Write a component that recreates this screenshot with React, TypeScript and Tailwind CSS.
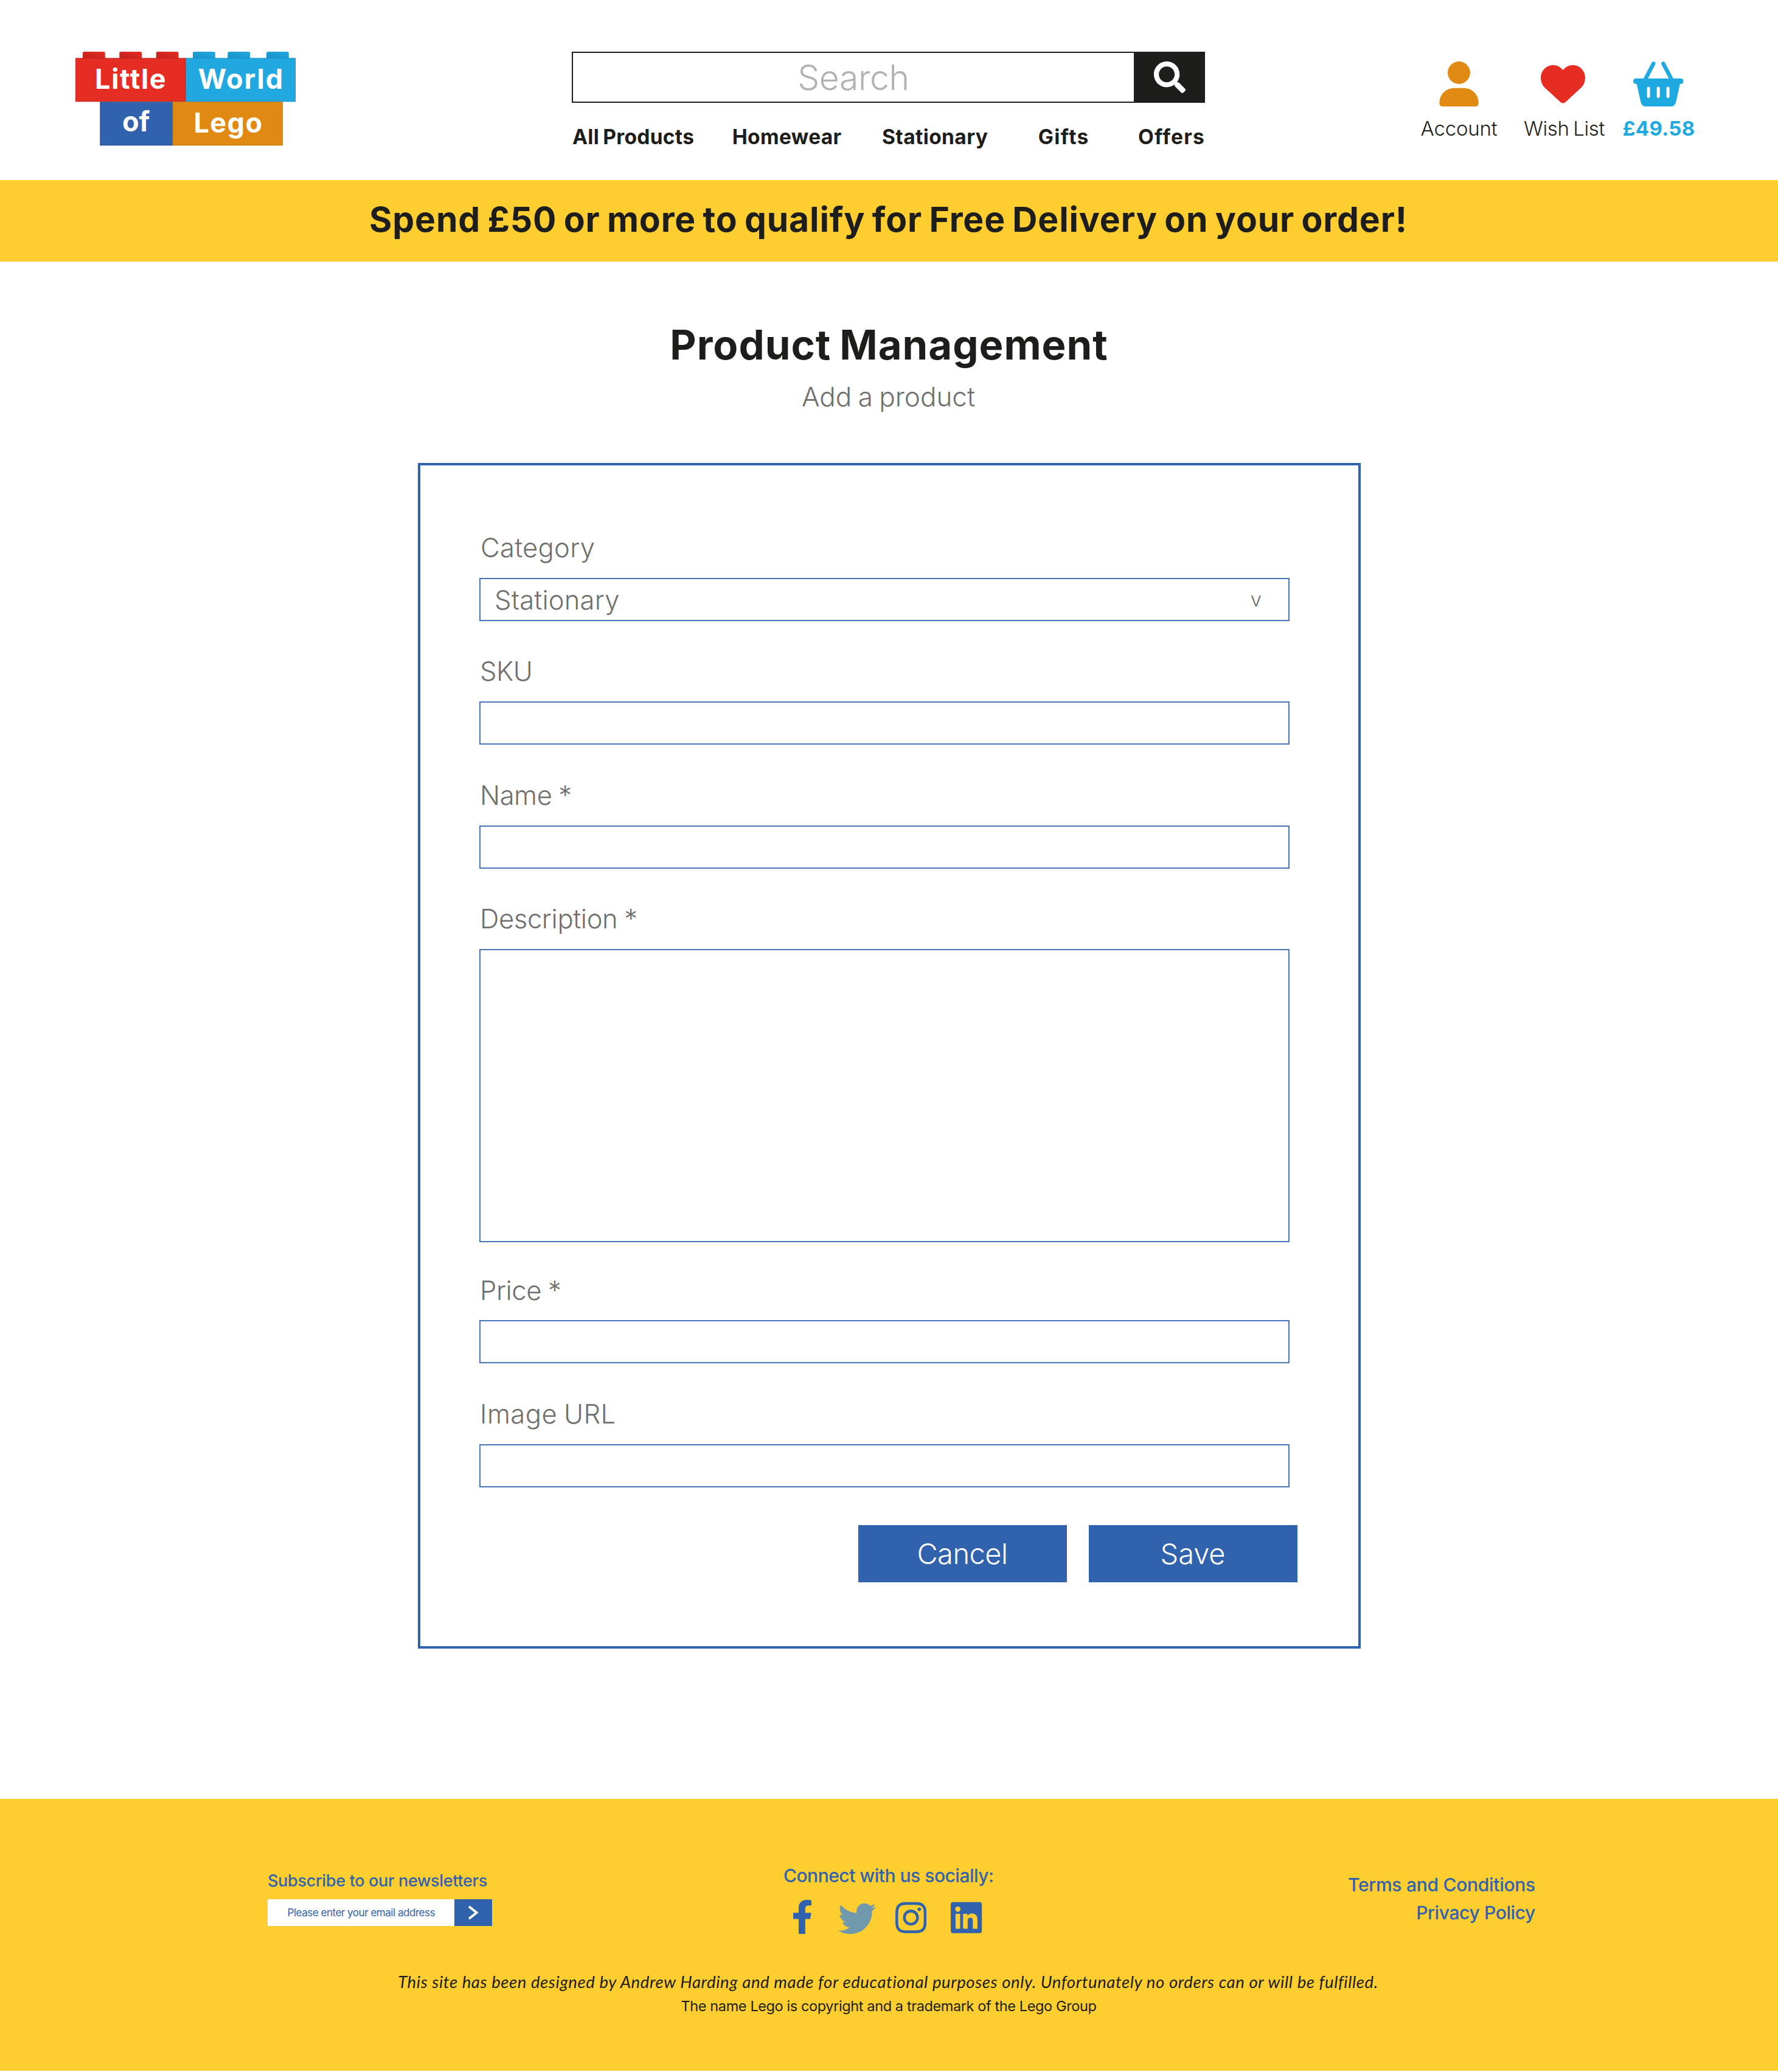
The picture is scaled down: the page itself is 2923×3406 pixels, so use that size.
import type { ReactNode } from "react";
import { FaFacebookF, FaInstagram, FaLinkedin, FaSearch, FaTwitter } from "react-icons/fa";

function Logo() {
  const studs = [
    { x: 12, fill: "url(#redStud)" },
    { x: 72.3, fill: "url(#redStud)" },
    { x: 132.7, fill: "url(#redStud)" },
    { x: 193, fill: "url(#cyanStud)" },
    { x: 250.3, fill: "url(#cyanStud)" },
    { x: 314, fill: "url(#cyanStud)" },
  ];
  return (
    <svg width="362" height="155" viewBox="0 0 362 155" className="block font-['Inter',sans-serif]">
      <defs>
        <linearGradient id="redStud" x1="0" y1="1" x2="1" y2="0">
          <stop offset="0" stopColor="#b91f1c" />
          <stop offset="1" stopColor="#e62d24" />
        </linearGradient>
        <linearGradient id="cyanStud" x1="0" y1="1" x2="1" y2="0">
          <stop offset="0" stopColor="#1a8fc4" />
          <stop offset="1" stopColor="#22a8e1" />
        </linearGradient>
      </defs>
      {studs.map((s) => (
        <rect key={s.x} x={s.x} y="0" width="36.8" height="14" rx="2.5" fill={s.fill} />
      ))}
      <rect x="0" y="10.3" width="181" height="72" fill="#c4251e" />
      <rect x="1" y="11.3" width="179" height="70" fill="#e62d24" />
      <rect x="181" y="10.3" width="181" height="72" fill="#1b90c6" />
      <rect x="182" y="11.3" width="179" height="70" fill="#22a8e1" />
      <rect x="40.3" y="82.3" width="119.5" height="72" fill="#264f90" />
      <rect x="41.3" y="83.3" width="117.5" height="70" fill="#3062ae" />
      <rect x="159.8" y="82.3" width="181" height="72" fill="#bf730d" />
      <rect x="160.8" y="83.3" width="179" height="70" fill="#e18a13" />
      <g fill="#fff" fontSize="45" fontWeight="700">
        <text x="32" y="60.5" letterSpacing="1.7">Little</text>
        <text x="201.5" y="60.5" letterSpacing="2">World</text>
        <text x="77" y="131" letterSpacing="0">of</text>
        <text x="194.5" y="132.5" letterSpacing="1.4">Lego</text>
      </g>
    </svg>
  );
}

function AccountIcon() {
  return (
    <svg width="65" height="74" viewBox="0 0 64.3 74" fill="#e18a13" className="block">
      <circle cx="32.1" cy="18.5" r="18.5" />
      <path d="M0 68C0 54 11 43.7 25 43.7H39.5C53.5 43.7 64.3 54 64.3 68Q64.3 74 59.3 74H5Q0 74 0 68Z" />
    </svg>
  );
}

function HeartIcon() {
  return (
    <svg width="73" height="63" viewBox="0 0 73 63" fill="#e62d24" className="block">
      <path d="M36.5 8C32 3 27 0 20.5 0C9 0 0 9.5 0 21C0 27 2.5 33 6.5 37L32.5 61Q36.5 64 40.5 61L66.5 37C70.5 33 73 27 73 21C73 9.5 64 0 53 0C46 0 41 3 36.5 8Z" />
    </svg>
  );
}

function BasketIcon() {
  return (
    <svg width="83" height="74" viewBox="0 0 83 74" className="block">
      <g stroke="#1eaae1" strokeWidth="6.5" strokeLinecap="round">
        <path d="M33.3 3.5L20 29" />
        <path d="M49.3 3.5L62.8 29" />
      </g>
      <g fill="#1eaae1">
        <rect x="0" y="28" width="82.6" height="9" rx="4.5" />
        <path d="M5.3 35L12 65.5Q14 74 20 74H62.6Q68.6 74 70.6 65.5L77.3 35Z" />
      </g>
      <g fill="#fff">
        <rect x="22.6" y="41.5" width="5" height="18.5" rx="2.5" />
        <rect x="38.7" y="41.5" width="5" height="18.5" rx="2.5" />
        <rect x="54.6" y="41.5" width="5" height="18.5" rx="2.5" />
      </g>
    </svg>
  );
}

function Field({ label, className = "", tall = false, children }: { label: string; className?: string; tall?: boolean; children?: ReactNode }) {
  return (
    <div className={tall ? "mb-[57.3px]" : "mb-[61.7px]"}>
      <div className={`ml-[1px] h-[43.5px] text-[43.5px] leading-none whitespace-nowrap ${className}`}>{label}</div>
      <div
        className={`mt-[27.3px] flex w-[1332px] items-center justify-between border-2 border-[#4a74b8] ${tall ? "h-[482px]" : "h-[71px]"}`}
      >
        {children}
      </div>
    </div>
  );
}

export default function App() {
  return (
    <div className="flex h-[3406px] w-[2923px] flex-col overflow-hidden bg-white font-['Inter',sans-serif] text-[#1d1d1b]">
      <header className="flex h-[296px] shrink-0 items-start">
        <div className="mt-[85px] ml-[124.4px] w-[815.6px] shrink-0">
          <Logo />
        </div>

        <div className="mt-[85px] w-[1041px] shrink-0">
          <div className="flex h-[84px] border-2 border-[#1d1d1b]">
            <div className="flex flex-1 items-center justify-center text-[57px] leading-none font-[330] tracking-[-0.4px] text-[#b2b2b2]">
              Search
            </div>
            <div className="flex w-[115px] items-center justify-center bg-[#1d1d1b]">
              <FaSearch className="ml-[4px] h-[52px] w-[52px] text-white" />
            </div>
          </div>
          <nav className="mt-[40px] ml-[1px] flex text-[33.5px] leading-none font-bold whitespace-nowrap">
            <a className="w-[263px] tracking-[0.3px] [word-spacing:-2px]">All Products</a>
            <a className="w-[246.5px] tracking-[0.35px]">Homewear</a>
            <a className="w-[257px] tracking-[0.4px]">Stationary</a>
            <a className="w-[164.5px] tracking-[1.4px]">Gifts</a>
            <a className="tracking-[1.2px]">Offers</a>
          </nav>
        </div>

        <div className="mt-[101px] ml-[353.5px] flex text-[33px] leading-none font-[350] whitespace-nowrap">
          <div className="flex w-[128px] flex-col items-center">
            <AccountIcon />
            <span className="mt-[19.5px] tracking-[-0.2px]">Account</span>
          </div>
          <div className="ml-[42px] flex w-[134px] flex-col items-center">
            <div className="h-[74px] pt-[5.5px] pr-[3px]">
              <HeartIcon />
            </div>
            <span className="mt-[19.5px] tracking-[-0.4px] [word-spacing:-2px]">Wish List</span>
          </div>
          <div className="ml-[29.5px] flex w-[118px] flex-col items-center">
            <BasketIcon />
            <span className="mt-[19.5px] font-bold tracking-[0.33px] text-[#1eaae1]">£49.58</span>
          </div>
        </div>
      </header>

      <div className="h-[134px] shrink-0 bg-[#fece30] pt-[36px] pr-[2px] text-center text-[57px] leading-none font-bold tracking-[0.87px] [word-spacing:-3px] whitespace-nowrap">
        Spend £50 or more to qualify for Free Delivery on your order!
      </div>

      <main className="shrink-0 pt-[103px]">
        <h1 className="text-center text-[67px] leading-none font-bold tracking-[1px] [word-spacing:-3px]">Product Management</h1>
        <p className="mt-[30px] pr-[2px] text-center text-[44px] leading-none font-[350] [word-spacing:-2px] text-[#6f6f6e]">
          Add a product
        </p>

        <form className="mt-[87px] ml-[687px] h-[1949px] w-[1550px] border-4 border-[#3062ae] pt-[114px] pl-[97px] font-[350] text-[#6f6f6e]">
          <Field label="Category" className="pl-[1px] tracking-[0.3px]">
            <span className="mt-[2px] ml-[23px] text-[43.5px] leading-none tracking-[0.2px]">Stationary</span>
            <span className="mt-[1px] mr-[44px] text-[33px] leading-none">v</span>
          </Field>
          <Field label="SKU" className="tracking-[-0.5px]" />
          <Field label="Name *" className="tracking-[-0.4px] [word-spacing:-1px]" />
          <Field label="Description *" className="tracking-[-0.35px] [word-spacing:-1px]" tall />
          <Field label="Price *" className="tracking-[-0.4px] [word-spacing:-1px]" />
          <Field label="Image URL" className="tracking-[0.5px] [word-spacing:-2px]" />
          <div className="ml-[622.5px] flex gap-[36px] text-[47px] leading-none text-white">
            <button type="button" className="flex h-[94px] w-[343px] items-center justify-center bg-[#3062ae] tracking-[-0.5px]">
              Cancel
            </button>
            <button type="button" className="flex h-[94px] w-[343px] items-center justify-center bg-[#3062ae] tracking-[-0.1px]">
              Save
            </button>
          </div>
        </form>
      </main>

      <footer className="mt-[247px] h-[447px] shrink-0 bg-[#fece30] text-[#3062ae]">
        <div className="flex h-[287px] items-start whitespace-nowrap">
          <div className="ml-[440px] w-[849px] pt-[121px]">
            <div className="text-[27px] leading-none font-medium tracking-[-0.32px]">Subscribe to our newsletters</div>
            <div className="mt-[17px] flex h-[44px] w-[369px] items-stretch bg-white">
              <div className="flex flex-1 items-center pl-[32.5px] text-[17px] leading-none tracking-[-0.47px]">
                Please enter your email address
              </div>
              <div className="flex w-[62px] items-center justify-center bg-[#3062ae]">
                <svg width="18" height="24" viewBox="0 0 18 24" fill="none" stroke="#fff" strokeWidth="4">
                  <path d="M2 2L14.5 12L2 22" />
                </svg>
              </div>
            </div>
          </div>

          <div className="w-[927px] pt-[111px]">
            <div className="-ml-[1px] text-[30px] leading-none font-medium tracking-[-0.5px]">Connect with us socially:</div>
            <div className="mt-[25px] flex items-start">
              <FaFacebookF className="ml-[12px] h-[56px] w-[36px]" />
              <FaTwitter className="ml-[40.5px] h-[62px] w-[62px] text-[#7199ae]" />
              <FaInstagram className="ml-[32px] h-[58.5px] w-[51.2px]" />
              <FaLinkedin className="ml-[40.7px] h-[58.5px] w-[51.2px]" />
            </div>
          </div>

          <div className="flex w-[308px] flex-col items-end pt-[118px] text-[30px] leading-[46px] font-medium">
            <a className="tracking-[-0.28px]">Terms and Conditions</a>
            <a className="tracking-[-0.38px]">Privacy Policy</a>
          </div>
        </div>

        <div className="flex flex-col items-center leading-none whitespace-nowrap text-[#1d1d1b]">
          <p className="mr-[3px] font-['Lato',sans-serif] text-[27.5px] tracking-[0.6px] italic">
            This site has been designed by Andrew Harding and made for educational purposes only. Unfortunately no orders can or will be
            fulfilled.
          </p>
          <p className="mt-[14.5px] mr-[1px] text-[23.5px] tracking-[-0.39px]">The name Lego is copyright and a trademark of the Lego Group</p>
        </div>
      </footer>
    </div>
  );
}
